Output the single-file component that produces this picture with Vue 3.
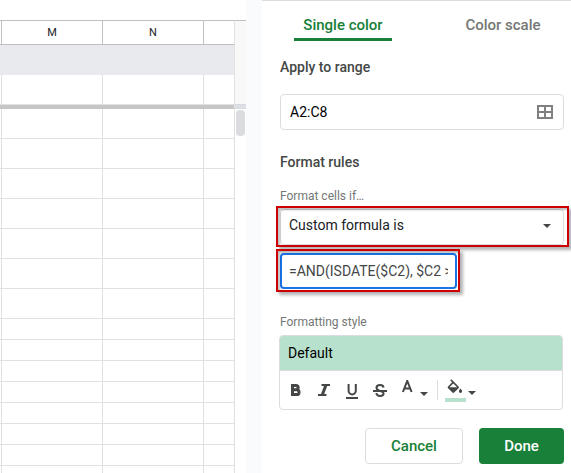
<script setup>
import { ref } from 'vue'

const tallRows = 7
const shortRows = 8
const range = ref('A2:C8')
const condition = ref('Custom formula is')
const formula = ref('=AND(ISDATE($C2), $C2 >=')
</script>

<template>
  <div class="page">
    <section class="sheet" aria-label="Sheet">
      <table class="grid">
        <colgroup>
          <col class="c-edge" /><col class="c-full" /><col class="c-full" /><col />
        </colgroup>
        <thead>
          <tr><th></th><th>M</th><th>N</th><th></th></tr>
        </thead>
        <tbody>
          <tr class="shaded"><td v-for="c in 4" :key="c"></td></tr>
          <tr class="before-freeze"><td v-for="c in 4" :key="c"></td></tr>
          <tr class="freeze"><td colspan="4"></td></tr>
          <tr v-for="r in tallRows" :key="'t' + r" class="tall"><td v-for="c in 4" :key="c"></td></tr>
          <tr v-for="r in shortRows" :key="'s' + r" class="short"><td v-for="c in 4" :key="c"></td></tr>
        </tbody>
      </table>
      <div class="scroll">
        <div class="scroll-head"></div>
        <div class="scroll-freeze"></div>
        <div class="thumb"></div>
      </div>
    </section>

    <aside class="panel">
      <div class="tabs" role="tablist">
        <button class="tab active" role="tab" aria-selected="true">Single color</button>
        <button class="tab" role="tab" aria-selected="false">Color scale</button>
      </div>

      <form class="form" @submit.prevent>
        <label class="heading" for="range">Apply to range</label>
        <div class="range">
          <input id="range" v-model="range" type="text" />
          <button type="button" class="range-btn" aria-label="Select data range">
            <svg width="16" height="14" viewBox="0 0 16 14">
              <path d="M1 1H15V13H1ZM8 1V13M1 7H15" fill="none" stroke="#808080" stroke-width="2" />
            </svg>
          </button>
        </div>

        <h2 class="heading rules">Format rules</h2>
        <label class="caption" for="cond">Format cells if…</label>
        <div class="marked">
          <select id="cond" v-model="condition">
            <option>Custom formula is</option>
          </select>
          <svg class="select-caret" width="8" height="4" viewBox="0 0 8 4"><path d="M0 0H8L4 4Z" fill="#444746" /></svg>
        </div>
        <div class="marked formula">
          <input v-model="formula" type="text" aria-label="Formula" />
        </div>

        <h3 class="caption style-title">Formatting style</h3>
        <div class="style-box">
          <button type="button" class="preview">Default</button>
          <div class="toolbar">
            <button type="button" class="tool" aria-label="Bold">
              <svg width="28" height="28" viewBox="0 0 28 28">
                <path class="heavy" d="M10.5 9.4H14A2.1 2.1 0 0 1 14 13.7H10.5M14 13.7H14.6A2.4 2.4 0 0 1 14.6 18.6H10.5V8" />
              </svg>
            </button>
            <button type="button" class="tool" aria-label="Italic">
              <svg width="28" height="28" viewBox="0 0 28 28">
                <path d="M11.5 9H20M8 19H16.5" />
                <path class="heavy" d="M16 9L12.2 19" />
              </svg>
            </button>
            <button type="button" class="tool" aria-label="Underline">
              <svg width="28" height="28" viewBox="0 0 28 28">
                <path d="M10.6 8V14.8A3.6 3.6 0 0 0 17.8 14.8V8M8 22H20" />
              </svg>
            </button>
            <button type="button" class="tool" aria-label="Strikethrough">
              <svg width="28" height="28" viewBox="0 0 28 28">
                <path d="M7 15H21M17.6 11.5C17.3 9.8 16 9 14 9C11.8 9 10.5 10 10.5 11.7C10.5 13.2 11.6 14 13.4 14.6M14.8 15.4C16.8 16 17.6 16.5 17.6 17.6C17.6 19.2 16.2 20 14.1 20C11.9 20 10.6 19 10.3 17.2" />
              </svg>
            </button>
            <button type="button" class="tool color" aria-label="Text color">
              <svg width="34" height="28" viewBox="0 0 34 28">
                <path d="M4.9 16L9.2 5H9.3L13.6 16M6.4 12.6H12" />
                <path class="solid" d="M22 16H30L26 20Z" />
              </svg>
            </button>
            <span class="divider"></span>
            <button type="button" class="tool" aria-label="Fill color">
              <svg width="34" height="28" viewBox="0 0 34 28">
                <path
                  class="solid"
                  transform="translate(2.3 3.3) scale(.8)"
                  d="M16.56 8.94L7.62 0 6.21 1.41l2.38 2.38-5.15 5.15c-.59.59-.59 1.54 0 2.12l5.5 5.5c.29.29.68.44 1.06.44s.77-.15 1.06-.44l5.5-5.5c.59-.58.59-1.53 0-2.12zM5.21 10L10 5.21 14.79 10H5.21zM19 11.5s-2 2.17-2 3.5c0 1.1.9 2 2 2s2-.9 2-2c0-1.33-2-3.5-2-3.5z"
                />
                <rect x="2" y="22" width="21" height="4" fill="#b7e1cd" />
                <path class="solid" d="M25 15H33L29 19Z" />
              </svg>
            </button>
          </div>
        </div>

        <div class="actions">
          <button type="button" class="btn cancel">Cancel</button>
          <button type="submit" class="btn done">Done</button>
        </div>
      </form>
    </aside>
  </div>
</template>

<style>
body {
  margin: 0;
}
</style>

<style scoped>
* {
  box-sizing: border-box;
}
.page {
  display: flex;
  gap: 16px;
  height: 100vh;
  overflow: hidden;
  background: #f9fbfd;
  font-family: Roboto, Arial, sans-serif;
  font-size: 14px;
  color: #202124;
}
button,
input,
select {
  font: inherit;
  color: inherit;
  margin: 0;
}
button {
  padding: 0;
  border: 0;
  background: none;
  cursor: pointer;
}

.sheet {
  flex: 1;
  min-width: 0;
  display: flex;
  align-items: stretch;
  padding-top: 20px;
  background: #fff;
  overflow: hidden;
}
.grid {
  flex: 1;
  min-width: 0;
  table-layout: fixed;
  border-collapse: separate;
  border-spacing: 0;
  align-self: flex-start;
}
.c-edge {
  width: 2px;
}
.c-full {
  width: 101px;
}
th,
td {
  padding: 0;
  border-right: 1px solid #e1e1e1;
  border-bottom: 1px solid #e1e1e1;
}
th {
  height: 25px;
  border-top: 1px solid #c0c0c0;
  border-right-color: #c0c0c0;
  border-bottom-color: #c0c0c0;
  font-size: 11px;
  font-weight: 400;
  line-height: 16px;
  color: #202124;
}
th:last-child {
  border-right-color: #e1e1e1;
}
.shaded td {
  height: 30px;
  background: #e8eaed;
  border-color: #e8eaed;
}
.shaded td:last-child {
  border-right-color: #e1e1e1;
}
.before-freeze td {
  height: 30px;
}
.freeze td {
  height: 4px;
  background: #c6c6c6;
  border-bottom: 0;
}
.tall td {
  height: 30px;
}
.short td {
  height: 21px;
}
.scroll {
  width: 11px;
  border-top: 1px solid #c0c0c0;
}
.scroll-head {
  height: 84px;
  background: #f8f8f8;
  border-bottom: 1px solid #d8d8d8;
}
.scroll-freeze {
  height: 4px;
  background: #dadfe8;
  border-bottom: 1px solid #d8d8d8;
}
.thumb {
  height: 26px;
  margin: 1px;
  border-radius: 4px;
  background: #dadce0;
}

.panel {
  flex: 0 0 309px;
  background: #fff;
  border-top: 1px solid #dadce0;
}
.tabs {
  display: flex;
  justify-content: space-between;
  padding: 0 19px 0 32px;
}
.tab {
  width: 98px;
  height: 40px;
  padding-top: 10px;
  border-bottom: 3px solid transparent;
  border-radius: 2px 2px 0 0;
  font-size: 15px;
  font-weight: 500;
  white-space: nowrap;
  color: #747775;
}
.tab.active {
  color: #188038;
  border-bottom-color: #188038;
}
.form {
  display: flex;
  flex-direction: column;
  padding: 16px 7px 8px 18px;
}
.heading {
  margin: 0;
  font-size: 14px;
  font-weight: 500;
  line-height: 20px;
  color: #444746;
}
.range {
  display: flex;
  align-items: center;
  height: 36px;
  margin-top: 17px;
  padding: 0 10px 0 9px;
  border: 1px solid #dadce0;
  border-radius: 4px;
}
.range input {
  flex: 1;
  min-width: 0;
  padding: 0;
  border: 0;
  outline: 0;
  background: none;
  color: #000;
}
.range-btn {
  display: flex;
}
.rules {
  margin-top: 22px;
}
.caption {
  margin: 16px 0 0;
  font-size: 12px;
  font-weight: 400;
  line-height: 16px;
  color: #747775;
}
.marked {
  position: relative;
  height: 36px;
  margin-top: 5px;
}
.marked::after {
  content: '';
  position: absolute;
  inset: -3px -5px -2px -4px;
  border: 2px solid #cc0000;
  box-shadow: 3px 3px 3px rgba(0, 0, 0, 0.3), inset 2px 2px 2px rgba(0, 0, 0, 0.25);
  pointer-events: none;
}
.marked select {
  appearance: none;
  width: 100%;
  height: 36px;
  padding: 0 24px 4px 8px;
  border: 1px solid #dadce0;
  border-radius: 4px;
  outline: 0;
  background: #fff;
}
.select-caret {
  position: absolute;
  right: 13px;
  top: 15px;
  pointer-events: none;
}
.formula {
  width: 177px;
  margin-top: 8px;
}
.formula::after {
  inset: -4px -3px -3px -4px;
}
.formula input {
  width: 100%;
  height: 36px;
  padding: 0 7px;
  border: 2px solid #1a73e8;
  border-radius: 4px;
  outline: 0;
  color: #444746;
}
.style-title {
  margin-top: 25px;
}
.style-box {
  margin: 5px 1px 0 -1px;
  border: 1px solid #dadce0;
  border-radius: 4px;
  overflow: hidden;
}
.preview {
  display: block;
  width: 100%;
  height: 35px;
  padding: 0 8px;
  border-bottom: 1px solid #dadce0;
  background: #b7e1cd;
  text-align: left;
  color: #000;
}
.toolbar {
  display: flex;
  align-items: center;
  height: 38px;
  padding-left: 2px;
}
.tool {
  display: flex;
}
.tool path {
  fill: none;
  stroke: #444746;
  stroke-width: 2;
}
.tool path.heavy {
  stroke-width: 3;
}
.tool path.solid {
  fill: #444746;
  stroke: none;
}
.color {
  margin-left: 4px;
}
.divider {
  width: 1px;
  height: 20px;
  margin: 0 5px;
  background: #dadce0;
}
.actions {
  display: flex;
  justify-content: flex-end;
  gap: 16px;
  margin-top: 18px;
}
.btn {
  height: 36px;
  border-radius: 4px;
  font-size: 15px;
  font-weight: 500;
}
.cancel {
  width: 98px;
  border: 1px solid #dadce0;
  color: #188038;
}
.done {
  width: 85px;
  background: #188038;
  color: #fff;
}
</style>
